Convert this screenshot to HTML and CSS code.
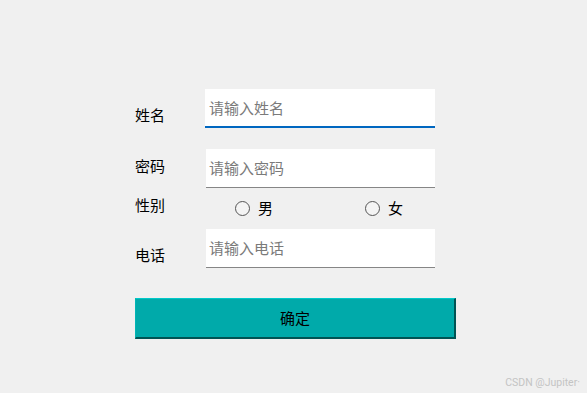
FILE: index.html
```html
<!DOCTYPE html>
<html lang="zh">
<head>
<meta charset="utf-8">
<title>表单</title>
<link rel="stylesheet" href="styles.css">
</head>
<body>
<div class="form">
  <div class="row row-name">
    <label class="label">姓名</label>
    <input class="field focused" type="text" placeholder="请输入姓名">
  </div>
  <div class="row row-pwd">
    <label class="label">密码</label>
    <input class="field" type="password" placeholder="请输入密码">
  </div>
  <div class="row row-gender">
    <span class="label">性别</span>
    <div class="radios">
      <span class="radio"><span class="circle"></span><span class="rtext">男</span></span>
      <span class="radio"><span class="circle"></span><span class="rtext">女</span></span>
    </div>
  </div>
  <div class="row row-tel">
    <label class="label">电话</label>
    <input class="field" type="text" placeholder="请输入电话">
  </div>
  <button class="submit" type="button">确定</button>
</div>
<div class="watermark">CSDN @Jupiter·</div>
</body>
</html>
```
FILE: styles.css
```css
html, body {
  margin: 0;
  padding: 0;
}
body {
  background: #f0f0f0;
  width: 587px;
  height: 393px;
  overflow: hidden;
  position: relative;
  font-family: "Noto Sans CJK SC", "Noto Sans", sans-serif;
  font-size: 15px;
  color: #000;
}
.form {
  padding: 89px 0 0 135px;
  display: flex;
  flex-direction: column;
}
.row {
  display: flex;
  align-items: flex-start;
}
.label {
  width: 70px;
  line-height: 20px;
  font-size: 15px;
  flex: none;
}
.row-name { height: 39px; margin-bottom: 21px; }
.row-name .label { padding-top: 16px; }
.row-pwd { height: 39px; }
.row-pwd .label { padding-top: 7px; }
.row-gender { height: 41px; }
.row-gender .label { padding-top: 7px; }
.row-tel { height: 39px; margin-bottom: 30px; }
.row-tel .label { padding-top: 16px; }

.field {
  box-sizing: border-box;
  width: 229px;
  height: 39px;
  margin: 0 0 0 1px;
  padding: 0 3px 1px;
  border: none;
  border-bottom: 1px solid #868686;
  background: #fff;
  font-family: "Noto Sans CJK SC", "Noto Sans", sans-serif;
  font-size: 15px;
  color: #000;
  outline: none;
}
.field::placeholder { color: #7a7a7a; }
.field.focused {
  width: 230px;
  margin-left: 0;
  padding-left: 4px;
  border-bottom: 2px solid #0067c0;
}
.radios {
  display: flex;
  padding: 11px 0 0 30px;
}
.radio {
  display: flex;
  align-items: center;
  width: 130px;
  line-height: 18px;
}
.circle {
  box-sizing: border-box;
  width: 15px;
  height: 15px;
  border: 1px solid #555;
  border-radius: 50%;
  background: #f4f4f4;
  margin-right: 8px;
}
.submit {
  box-sizing: border-box;
  width: 321px;
  height: 41px;
  padding: 0 0 2px;
  margin: 0;
  background: #00aaaa;
  border-top: 1px solid #00c9c9;
  border-left: 1px solid #00b5b5;
  border-right: 2px solid #005454;
  border-bottom: 2px solid #005454;
  font-family: "Noto Sans CJK SC", "Noto Sans", sans-serif;
  font-size: 15px;
  color: #000;
  text-align: center;
}
.watermark {
  position: absolute;
  right: 7px;
  bottom: 4px;
  font-family: Roboto, "Noto Sans", sans-serif;
  font-size: 10.5px;
  color: #c4c4c4;
}
```
